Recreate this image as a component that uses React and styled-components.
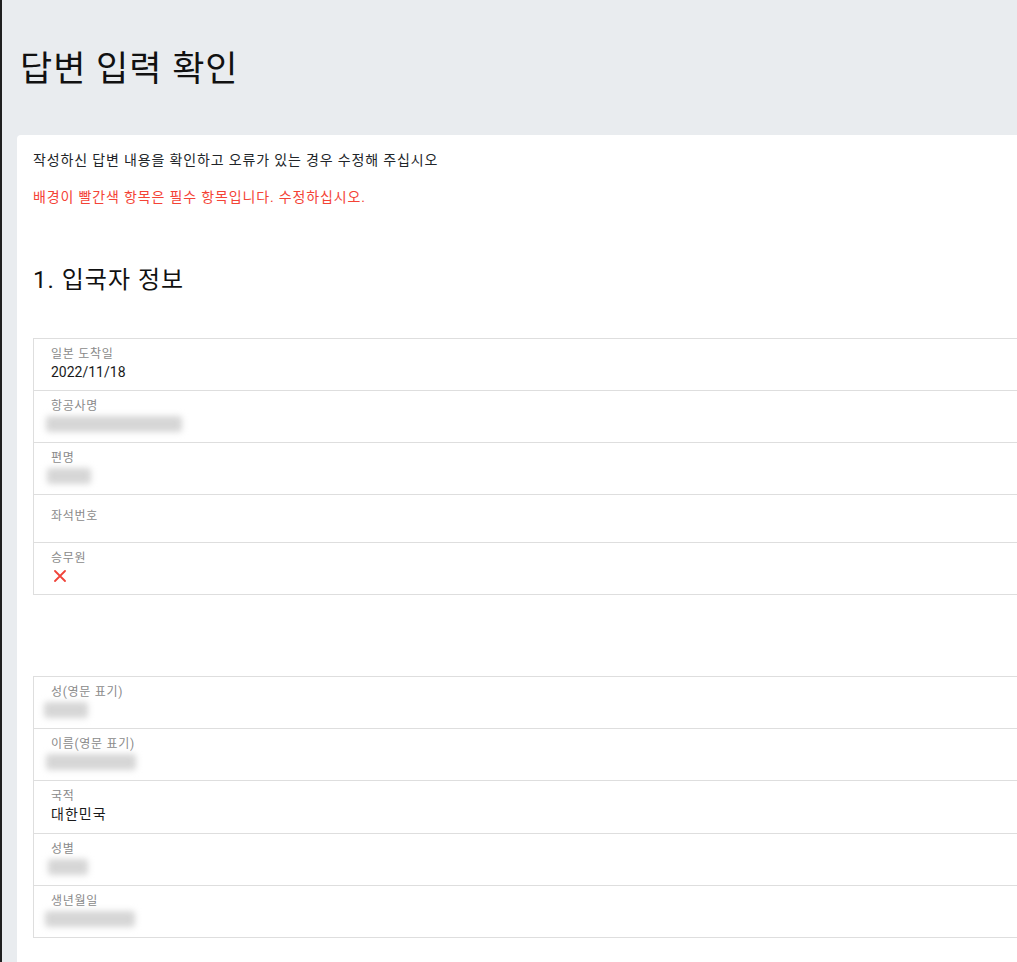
import React from 'react';
import styled, { createGlobalStyle } from 'styled-components';

const GlobalStyle = createGlobalStyle`
  html, body {
    margin: 0;
    padding: 0;
    overflow: hidden;
    background: #e9ecef;
  }
  body {
    font-family: Roboto, "Noto Sans CJK KR", sans-serif;
    color: #212529;
  }
`;

const Page = styled.div`
  min-height: 962px;
  border-left: 2px solid #1f1f1f;
  padding-left: 15px;
  background: #e9ecef;
`;

const Title = styled.h1`
  margin: 0;
  padding: 46px 0 0 3px;
  height: 135px;
  box-sizing: border-box;
  font-size: 35px;
  font-weight: 400;
  line-height: 48px;
  letter-spacing: 1px;
  color: #111;
`;

const Card = styled.section`
  width: 1100px;
  min-height: 840px;
  background: #fff;
  border-radius: 4px;
  padding: 15px 0 0 16px;
  box-sizing: border-box;
`;

const Intro = styled.p`
  margin: 0;
  font-size: 14px;
  line-height: 20px;
  letter-spacing: 0.85px;
  color: ${(p) => (p.$warn ? '#f44336' : '#212529')};
  & + & {
    margin-top: 17px;
  }
`;

const SectionTitle = styled.h2`
  margin: 57px 0 0;
  font-size: 24px;
  font-weight: 400;
  line-height: 32px;
  letter-spacing: 1px;
  color: #111;
`;

const Table = styled.div`
  margin-top: ${(p) => p.$gap}px;
  border: 1px solid #dedede;
  border-bottom: none;
`;

const Row = styled.div`
  display: flex;
  flex-direction: column;
  padding: ${(p) => (p.$empty ? '13px 17px 18px' : '7px 17px 8px')};
  border-bottom: 1px solid #dedede;
`;

const Label = styled.span`
  font-size: 12px;
  line-height: 16px;
  letter-spacing: 0.7px;
  color: #8a8a8a;
`;

const Value = styled.span`
  font-size: 14px;
  line-height: ${(p) => (p.$ko ? '21px' : '20px')};
  letter-spacing: ${(p) => (p.$ko ? '1px' : '0')};
  color: #1a1a1a;
`;

const Blur = styled.span`
  display: block;
  width: ${(p) => p.$w}px;
  height: 16px;
  margin: 2px 0 2px ${(p) => p.$x}px;
  background: #d6d6d6;
  filter: blur(3px);
  border-radius: 3px;
`;

const Cross = styled.svg`
  display: block;
  margin: 4px 0 4px 3px;
`;

function Field({ label, value, ko, blur, empty, cross }) {
  return (
    <Row $empty={empty}>
      <Label>{label}</Label>
      {value && <Value $ko={ko}>{value}</Value>}
      {blur && <Blur $w={blur[0]} $x={blur[1]} />}
      {cross && (
        <Cross width="12" height="12" viewBox="0 0 12 12">
          <path d="M1 1 L11 11 M11 1 L1 11" stroke="#f0443a" strokeWidth="1.8" strokeLinecap="round" />
        </Cross>
      )}
    </Row>
  );
}

export default function App() {
  return (
    <>
      <GlobalStyle />
      <Page>
        <Title>답변 입력 확인</Title>
        <Card>
          <Intro>작성하신 답변 내용을 확인하고 오류가 있는 경우 수정해 주십시오</Intro>
          <Intro $warn>배경이 빨간색 항목은 필수 항목입니다. 수정하십시오.</Intro>
          <SectionTitle>1. 입국자 정보</SectionTitle>
          <Table $gap={42}>
            <Field label="일본 도착일" value="2022/11/18" />
            <Field label="항공사명" blur={[136, -5]} />
            <Field label="편명" blur={[44, -4]} />
            <Field label="좌석번호" empty />
            <Field label="승무원" cross />
          </Table>
          <Table $gap={81}>
            <Field label="성(영문 표기)" blur={[44, -7]} />
            <Field label="이름(영문 표기)" blur={[90, -5]} />
            <Field label="국적" value="대한민국" ko />
            <Field label="성별" blur={[40, -3]} />
            <Field label="생년월일" blur={[90, -6]} />
          </Table>
        </Card>
      </Page>
    </>
  );
}
